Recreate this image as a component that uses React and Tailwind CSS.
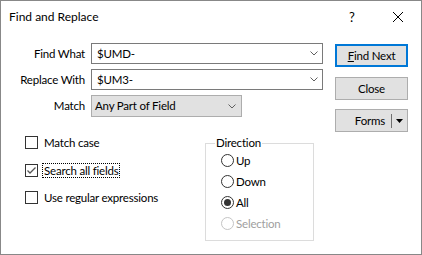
import React from "react";

function Chevron() {
  return (
    <svg width="8" height="5" viewBox="0 0 8 5" className="block">
      <polyline points="0.5,0.5 4,4 7.5,0.5" fill="none" stroke="#606060" strokeWidth="1" />
    </svg>
  );
}

function Checkbox({ checked }) {
  return (
    <div className="w-[13px] h-[13px] border border-[#333333] bg-white shrink-0 flex items-center justify-center">
      {checked && (
        <svg width="11" height="11" viewBox="0 0 11 11" className="block">
          <polyline points="1.5,5.5 4,8 9.5,2.5" fill="none" stroke="#555555" strokeWidth="1.3" />
        </svg>
      )}
    </div>
  );
}

function Radio({ checked, disabled, label }) {
  return (
    <div className="h-[21px] flex items-center pl-[15px]">
      <div
        className={
          "w-[13px] h-[13px] rounded-full border bg-white shrink-0 flex items-center justify-center " +
          (disabled ? "border-[#c4c4c4]" : "border-[#333333]")
        }
      >
        {checked && <div className="w-[7px] h-[7px] rounded-full bg-[#333333]" />}
      </div>
      <span className={"ml-[2px] leading-[16px] " + (disabled ? "text-[#a0a0a0]" : "text-black")}>{label}</span>
    </div>
  );
}

export default function App() {
  return (
    <div className="w-[422px] h-[255px] border border-[#888888] bg-white flex flex-col text-[11.5px] tracking-[-0.2px] text-black font-['Lato','Segoe_UI',sans-serif] leading-[16px]">
      {/* Title bar */}
      <div className="h-[31px] flex items-center shrink-0">
        <div className="pl-[8px] flex-1 text-[12px] tracking-normal">Find and Replace</div>
        <div className="w-[46px] h-full flex items-center justify-center text-[13px] tracking-normal">?</div>
        <div className="w-[46px] h-full flex items-center justify-center">
          <svg width="10" height="10" viewBox="0 0 10 10" className="block">
            <line x1="0" y1="0" x2="10" y2="10" stroke="#000" strokeWidth="1" />
            <line x1="10" y1="0" x2="0" y2="10" stroke="#000" strokeWidth="1" />
          </svg>
        </div>
      </div>

      {/* Top section */}
      <div className="flex items-start pt-[11px]">
        <div className="grid grid-cols-[84px_232px] gap-x-[6px] gap-y-[5px]">
          <div className="h-[21px] flex items-center justify-end">Find What</div>
          <div className="h-[21px] border border-[#7a7a7a] bg-white flex items-center pl-[5px] pr-[4px]">
            <span className="flex-1">$UMD-</span>
            <Chevron />
          </div>
          <div className="h-[21px] flex items-center justify-end">Replace With</div>
          <div className="h-[21px] border border-[#7a7a7a] bg-white flex items-center pl-[5px] pr-[4px]">
            <span className="flex-1">$UM3-</span>
            <Chevron />
          </div>
          <div className="h-[22px] flex items-center justify-end">Match</div>
          <div className="h-[22px] w-[151px] border border-[#adadad] bg-[#e1e1e1] flex items-center pl-[3px] pr-[5px]">
            <span className="flex-1">Any Part of Field</span>
            <Chevron />
          </div>
        </div>

        <div className="ml-[12px] mt-[1px] flex flex-col w-[73px]">
          <div className="h-[23px] border-2 border-[#0078d7] bg-[#e1e1e1] flex items-center justify-center">
            <span>
              <span className="underline">F</span>ind Next
            </span>
          </div>
          <div className="mt-[10px] h-[23px] border border-[#adadad] bg-[#e1e1e1] flex items-center justify-center">
            Close
          </div>
          <div className="mt-[9px] h-[23px] border border-[#adadad] bg-[#e1e1e1] flex items-center">
            <div className="flex-1 flex justify-end pr-[6px]">Forms</div>
            <div className="w-[1px] h-[14px] bg-[#707070]" />
            <div className="w-[15px] flex items-center justify-center">
              <svg width="7" height="4" viewBox="0 0 7 4" className="block">
                <polygon points="0,0 7,0 3.5,4" fill="#000" />
              </svg>
            </div>
          </div>
        </div>
      </div>

      {/* Bottom section */}
      <div className="flex items-start">
        <div className="w-[204px] pl-[24px] pt-[4px] flex flex-col">
          <div className="h-[13px] flex items-center">
            <Checkbox />
            <span className="ml-[6px]">Match case</span>
          </div>
          <div className="mt-[15px] h-[13px] flex items-center">
            <Checkbox checked />
            <span className="ml-[4px] px-[1px] border border-dotted border-black leading-[13px]">Search all fields</span>
          </div>
          <div className="mt-[14px] h-[13px] flex items-center">
            <Checkbox />
            <span className="ml-[6px]">Use regular expressions</span>
          </div>
        </div>

        <div className="mt-[11px] w-[109px] h-[98px] border border-[#dcdcdc]">
          <div className="-mt-[9px] ml-[9px] h-[16px] w-fit px-[1px] bg-white">Direction</div>
          <div className="-mt-[1px]">
            <Radio label="Up" />
            <Radio label="Down" />
            <Radio label="All" checked />
            <Radio label="Selection" disabled />
          </div>
        </div>
      </div>
    </div>
  );
}
